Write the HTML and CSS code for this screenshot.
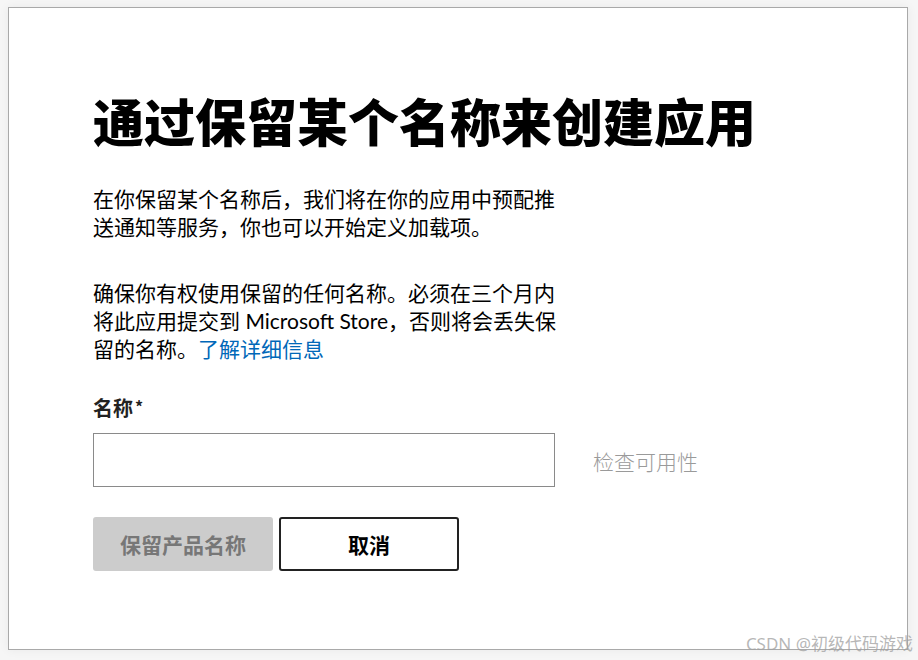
FILE: index.html
```html
<!DOCTYPE html>
<html lang="zh-CN">
<head>
<meta charset="utf-8">
<title>保留名称</title>
<link rel="stylesheet" href="styles.css">
</head>
<body>
<div class="frame">
  <main class="content">
    <h1 class="title">通过保留某个名称来创建应用</h1>
    <p class="para">在你保留某个名称后，我们将在你的应用中预配推送通知等服务，你也可以开始定义加载项。</p>
    <p class="para second">确保你有权使用保留的任何名称。必须在三个月内将此应用提交到 Microsoft Store，否则将会丢失保留的名称。<a class="link" href="#">了解详细信息</a></p>
    <label class="label" for="name">名称<span class="req">*</span></label>
    <div class="row">
      <input id="name" class="input" type="text">
      <span class="check">检查可用性</span>
    </div>
    <div class="buttons">
      <button class="btn primary" type="button">保留产品名称</button>
      <button class="btn cancel" type="button">取消</button>
    </div>
  </main>
</div>
<div class="watermark">CSDN @初级代码游戏</div>
</body>
</html>
```
FILE: styles.css
```css
html, body {
  margin: 0;
  padding: 0;
}
body {
  background: #f6f6f6;
  width: 918px;
  height: 660px;
  overflow: hidden;
  position: relative;
  font-family: "Noto Sans", "Noto Sans CJK SC", sans-serif;
  color: #000;
}
.frame {
  box-sizing: border-box;
  margin: 7px 0 0 8px;
  width: 900px;
  height: 643px;
  background: #fff;
  border: 1px solid #a9a9a9;
  box-shadow: 0 0 10px rgba(0,0,0,0.06);
}
.content {
  padding: 77px 0 0 84px;
  display: flex;
  flex-direction: column;
  align-items: flex-start;
}
.title {
  margin: 0;
  font-family: "Noto Sans CJK SC", sans-serif;
  font-weight: 900;
  font-size: 51px;
  line-height: 70px;
  white-space: nowrap;
}
.para {
  margin: 30px 0 0 0;
  width: 472px;
  font-family: Lato, "Noto Sans CJK SC", sans-serif;
  font-size: 21px;
  line-height: 28px;
}
.para.second {
  margin-top: 38px;
}
.link {
  color: #0067b8;
  text-decoration: none;
}
.label {
  margin-top: 29px;
  font-family: "Noto Sans CJK SC", sans-serif;
  font-weight: 700;
  font-size: 20px;
  line-height: 28px;
  color: #222;
}
.req {
  font-size: 16px;
  vertical-align: 3px;
  margin-left: 2px;
}
.row {
  margin-top: 11px;
  display: flex;
  align-items: center;
  gap: 38px;
}
.input {
  box-sizing: border-box;
  width: 462px;
  height: 54px;
  border: 1px solid #8a8a8a;
  border-radius: 0;
  margin: 0;
  padding: 0 10px;
  font-size: 20px;
  background: #fff;
}
.check {
  font-size: 21px;
  font-weight: 300;
  color: #9a9a9a;
  padding-top: 2px;
}
.buttons {
  margin-top: 30px;
  display: flex;
  gap: 6px;
}
.btn {
  box-sizing: border-box;
  width: 180px;
  height: 54px;
  margin: 0;
  border-radius: 3px;
  font-family: "Noto Sans CJK SC", sans-serif;
  font-weight: 700;
  font-size: 21px;
  cursor: pointer;
}
.primary {
  background: #cccccc;
  border: none;
  color: #777;
}
.cancel {
  background: #fff;
  border: 2px solid #222;
  color: #000;
}
.watermark {
  position: absolute;
  right: 5px;
  bottom: 5px;
  font-family: "Noto Sans", "Noto Sans CJK SC", sans-serif;
  font-size: 17px;
  color: rgba(160,160,160,0.75);
}
```
